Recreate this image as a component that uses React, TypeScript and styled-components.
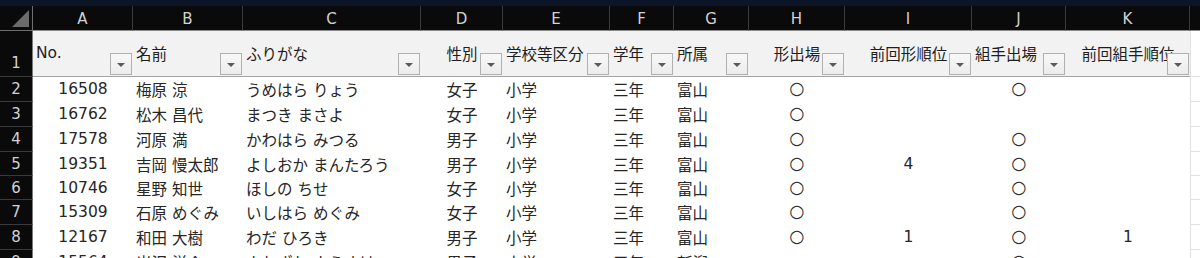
import React from "react";
import styled, { createGlobalStyle } from "styled-components";

const GlobalStyle = createGlobalStyle`
  html, body { margin: 0; padding: 0; background: #ffffff; overflow: hidden; }
  * { box-sizing: border-box; }
`;

type Align = "left" | "center" | "right";

interface ColDef {
  key: string;
  width: number;
  head: string;
  headAlign: Align;
  dataAlign: Align;
}

const COLS: ColDef[] = [
  { key: "A", width: 100, head: "No.", headAlign: "left", dataAlign: "center" },
  { key: "B", width: 110, head: "名前", headAlign: "left", dataAlign: "left" },
  { key: "C", width: 178, head: "ふりがな", headAlign: "left", dataAlign: "left" },
  { key: "D", width: 82, head: "性別", headAlign: "center", dataAlign: "center" },
  { key: "E", width: 107, head: "学校等区分", headAlign: "left", dataAlign: "left" },
  { key: "F", width: 64, head: "学年", headAlign: "left", dataAlign: "left" },
  { key: "G", width: 75, head: "所属", headAlign: "left", dataAlign: "left" },
  { key: "H", width: 96, head: "形出場", headAlign: "center", dataAlign: "center" },
  { key: "I", width: 127, head: "前回形順位", headAlign: "center", dataAlign: "center" },
  { key: "J", width: 94, head: "組手出場", headAlign: "left", dataAlign: "center" },
  { key: "K", width: 124, head: "前回組手順位", headAlign: "center", dataAlign: "center" },
];

const ROWS: { h: number; cells: string[] }[] = [
  { h: 25, cells: ["16508", "梅原 涼", "うめはら りょう", "女子", "小学", "三年", "富山", "○", "", "○", ""] },
  { h: 25, cells: ["16762", "松木 昌代", "まつき まさよ", "女子", "小学", "三年", "富山", "○", "", "", ""] },
  { h: 25, cells: ["17578", "河原 満", "かわはら みつる", "男子", "小学", "三年", "富山", "○", "", "○", ""] },
  { h: 24, cells: ["19351", "吉岡 慢太郎", "よしおか まんたろう", "男子", "小学", "三年", "富山", "○", "4", "○", ""] },
  { h: 24, cells: ["10746", "星野 知世", "ほしの ちせ", "女子", "小学", "三年", "富山", "○", "", "○", ""] },
  { h: 25, cells: ["15309", "石原 めぐみ", "いしはら めぐみ", "女子", "小学", "三年", "富山", "○", "", "○", ""] },
  { h: 25, cells: ["12167", "和田 大樹", "わだ ひろき", "男子", "小学", "三年", "富山", "○", "1", "○", "1"] },
  { h: 25, cells: ["15564", "米沢 洋介", "よねざわ ようすけ", "男子", "小学", "三年", "新潟", "", "", "○", ""] },
];

const FONT = `"DejaVu Sans", "Noto Sans CJK JP", sans-serif`;

const Window = styled.div`
  width: 1200px;
  height: 258px;
  overflow: hidden;
  background: #ffffff;
  font-family: ${FONT};
`;

const TopStrip = styled.div`
  height: 6px;
  background: #0b1527;
`;

const Sheet = styled.div<{ $template: string; $rows: string }>`
  display: grid;
  grid-template-columns: ${(p) => p.$template};
  grid-template-rows: ${(p) => p.$rows};
`;

const Corner = styled.div`
  background: #0a0a0a;
  border-right: 1px solid #6e6e6e;
  border-bottom: 1px solid #6e6e6e;
  display: flex;
  align-items: flex-end;
  justify-content: flex-end;
  padding: 0 3px 3px 0;
`;

const CornerTriangle = styled.div`
  width: 0;
  height: 0;
  border-left: 17px solid transparent;
  border-bottom: 17px solid #6b6b6b;
`;

const ColHead = styled.div`
  background: #0a0a0a;
  color: #d2d2d2;
  font-size: 15px;
  display: flex;
  align-items: center;
  justify-content: center;
  border-right: 1px solid #3a3a3a;
  border-bottom: 1px solid #8c8c8c;
  padding-top: 1px;
`;

const ColHeadBlank = styled.div`
  background: #0a0a0a;
  border-bottom: 1px solid #8c8c8c;
`;

const RowHead = styled.div<{ $tall?: boolean }>`
  background: #0a0a0a;
  color: #d2d2d2;
  font-size: 15px;
  display: flex;
  justify-content: center;
  align-items: ${(p) => (p.$tall ? "flex-end" : "center")};
  padding-bottom: ${(p) => (p.$tall ? "4px" : "0")};
  border-right: 1px solid #7a7a7a;
  border-bottom: 1px solid #3a3a3a;
`;

const HeaderCell = styled.div<{ $align: Align }>`
  position: relative;
  background: #f2f2f2;
  color: #1e1e1e;
  font-size: 15.5px;
  display: flex;
  align-items: center;
  justify-content: ${(p) =>
    p.$align === "center" ? "center" : p.$align === "right" ? "flex-end" : "flex-start"};
  padding: 0 3px 2px 3px;
  border-bottom: 1px solid #a3a3a3;
  white-space: nowrap;
`;

const FilterButton = styled.div`
  position: absolute;
  right: 1px;
  bottom: 1px;
  width: 22px;
  height: 22px;
  border: 1px solid #b0b0b0;
  background: linear-gradient(#f8f8f8, #ececec);
  display: flex;
  align-items: center;
  justify-content: center;
  padding-top: 2px;
`;

const FilterArrow = styled.div`
  width: 0;
  height: 0;
  border-left: 4px solid transparent;
  border-right: 4px solid transparent;
  border-top: 4px solid #5a5a5a;
`;

const DataCell = styled.div<{ $align: Align }>`
  background: #ffffff;
  color: #262626;
  font-size: 15.5px;
  display: flex;
  align-items: center;
  justify-content: ${(p) =>
    p.$align === "center" ? "center" : p.$align === "right" ? "flex-end" : "flex-start"};
  padding: 0 3px 1px 3px;
  white-space: nowrap;
`;

const Mark = styled.span`
  font-size: 17.5px;
  line-height: 1;
  color: #2a2a2a;
`;

const OuterCell = styled.div`
  background: #ffffff;
  border-bottom: 1px solid #e1e1e1;
  border-left: 1px solid #e1e1e1;
`;

export default function App() {
  const template = ["33px", ...COLS.map((c) => `${c.width}px`), "1fr"].join(" ");
  const rowTemplate = ["25px", "46px", ...ROWS.map((r) => `${r.h}px`)].join(" ");

  return (
    <>
      <GlobalStyle />
      <Window>
        <TopStrip />
        <Sheet $template={template} $rows={rowTemplate}>
          <Corner>
            <CornerTriangle />
          </Corner>
          {COLS.map((c) => (
            <ColHead key={`ch-${c.key}`}>{c.key}</ColHead>
          ))}
          <ColHeadBlank />

          <RowHead $tall>1</RowHead>
          {COLS.map((c) => (
            <HeaderCell key={`h-${c.key}`} $align={c.headAlign}>
              {c.head}
              <FilterButton>
                <FilterArrow />
              </FilterButton>
            </HeaderCell>
          ))}
          <OuterCell />

          {ROWS.map((r, i) => (
            <React.Fragment key={`r-${i}`}>
              <RowHead>{i + 2}</RowHead>
              {r.cells.map((v, j) => (
                <DataCell key={`c-${i}-${j}`} $align={COLS[j].dataAlign}>
                  {v === "○" ? <Mark>{v}</Mark> : v}
                </DataCell>
              ))}
              <OuterCell />
            </React.Fragment>
          ))}
        </Sheet>
      </Window>
    </>
  );
}
